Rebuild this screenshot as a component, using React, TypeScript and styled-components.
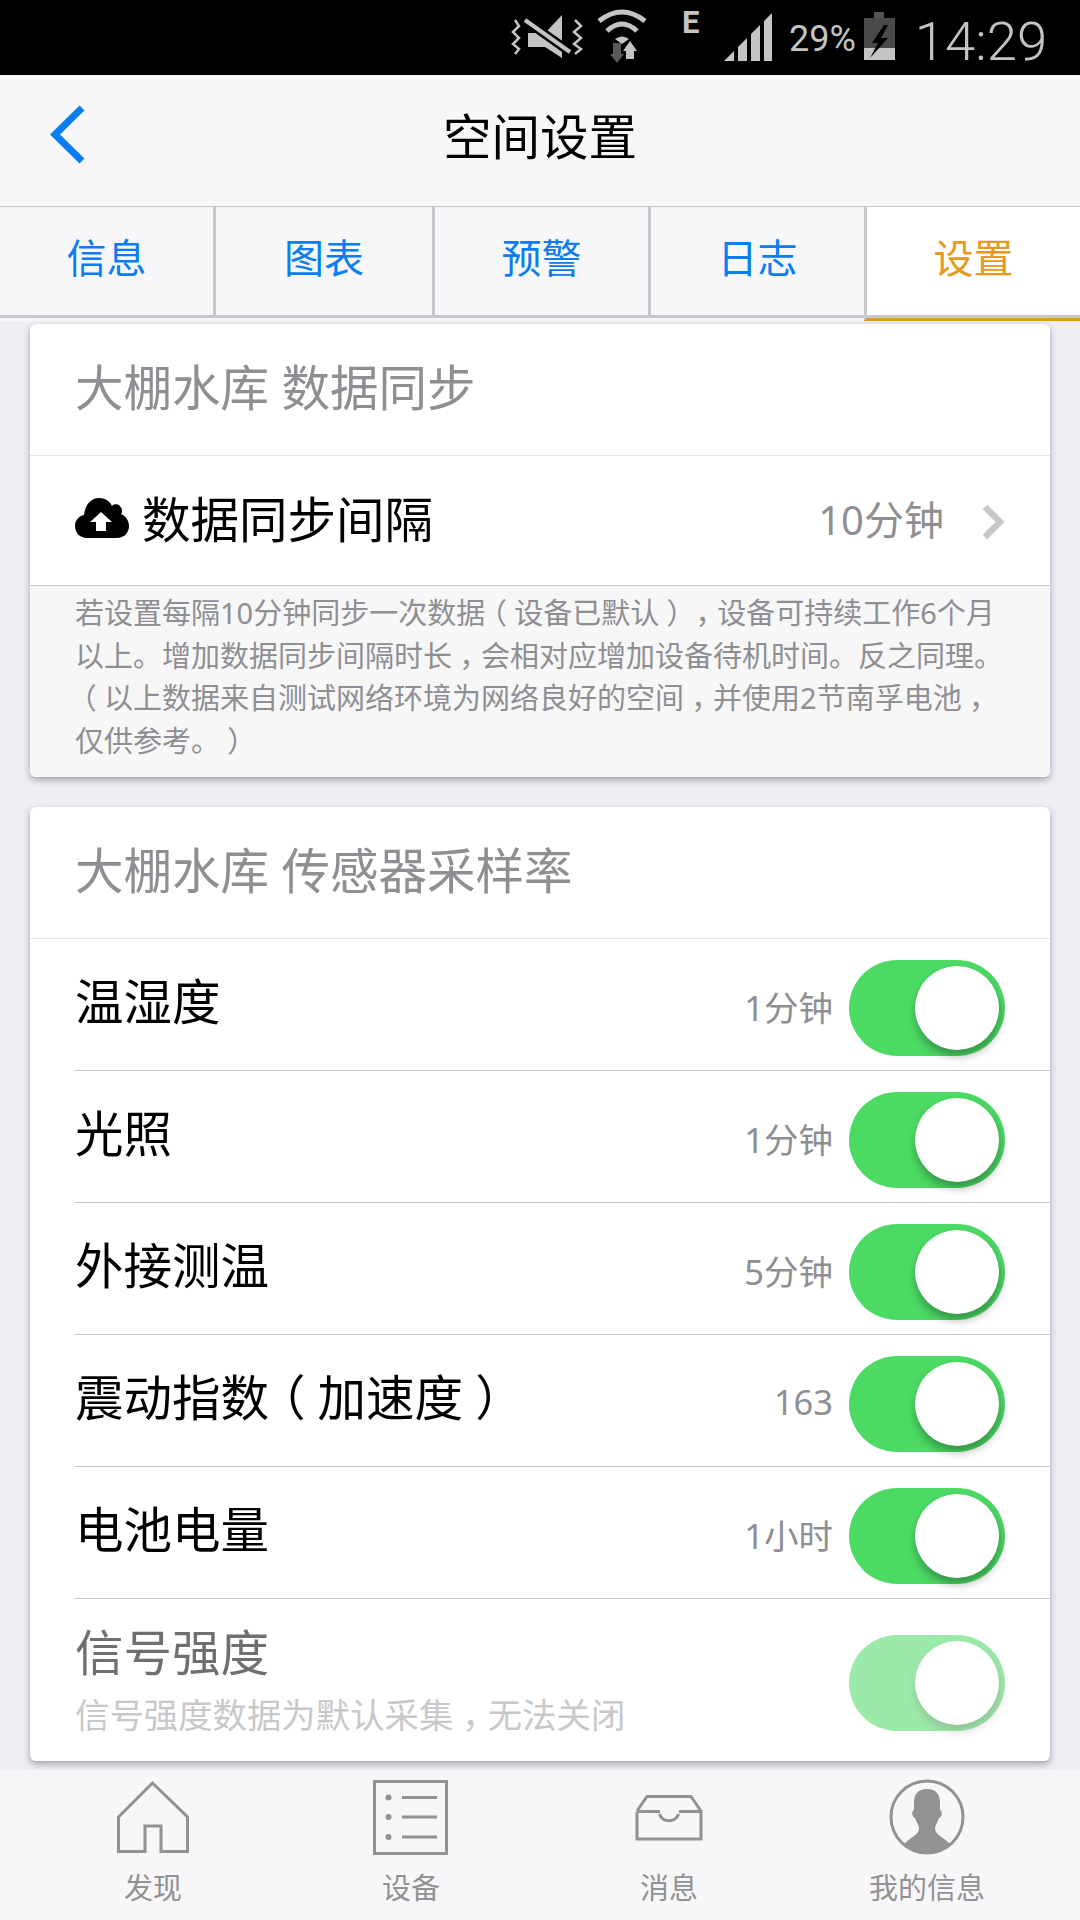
import React from "react";
import styled, { createGlobalStyle } from "styled-components";

const colors = {
  blue: "#0a7df2",
  orange: "#e8981e",
  gray: "#8e8e93",
  line: "#c8c7cc",
  lineLight: "#e4e4e6",
  bar: "#f7f7f9",
  page: "#eeeef4",
  green: "#4cd964",
  status: "#c4c4c4",
  icon: "#929292",
};

const GlobalStyle = createGlobalStyle`
  html, body {
    margin: 0;
    padding: 0;
    background: ${colors.page};
  }
  body {
    font-family: "Noto Sans", "Noto Sans CJK SC", sans-serif;
    color: #000;
  }
  * {
    box-sizing: border-box;
  }
`;

const Screen = styled.div`
  width: 1080px;
  height: 1920px;
  display: flex;
  flex-direction: column;
  overflow: hidden;
`;

/* status bar */
const StatusBar = styled.div`
  height: 75px;
  flex: none;
  background: #000;
  display: flex;
  align-items: flex-start;
  padding-left: 510px;
  color: ${colors.status};
`;

const StatusIcon = styled.svg<{ $left: number; $top: number }>`
  flex: none;
  margin-left: ${(p) => p.$left}px;
  margin-top: ${(p) => p.$top}px;
`;

const NetworkType = styled.span`
  margin-left: 34px;
  margin-top: 5px;
  width: 20px;
  font: 700 31px/36px Roboto, sans-serif;
`;

const Percent = styled.span`
  margin-left: 17px;
  margin-top: 19px;
  font: 400 36px/40px Roboto, sans-serif;
`;

const Clock = styled.span`
  margin-left: 20px;
  margin-top: 9px;
  font: 300 54.5px/64px Roboto, sans-serif;
`;

/* nav bar */
const NavBar = styled.div`
  height: 132px;
  flex: none;
  background: ${colors.bar};
  border-bottom: 1px solid ${colors.line};
  display: flex;
  align-items: center;
  justify-content: center;
  position: relative;
`;

const BackIcon = styled.svg`
  position: absolute;
  left: 47px;
  top: 27px;
`;

const NavTitle = styled.div`
  font-size: 48.5px;
  line-height: 60px;
  margin-top: -9px;
`;

/* tabs */
const TabRow = styled.div`
  height: 114px;
  flex: none;
  display: flex;
  background: ${colors.bar};
`;

const Tab = styled.div<{ $active?: boolean }>`
  flex: none;
  width: 216px;
  height: ${(p) => (p.$active ? 114 : 111)}px;
  display: flex;
  align-items: center;
  justify-content: center;
  padding-bottom: ${(p) => (p.$active ? 13 : 10)}px;
  font-size: 40px;
  color: ${(p) => (p.$active ? colors.orange : colors.blue)};
  background: ${(p) => (p.$active ? "#fff" : colors.bar)};
  border-bottom: 3px solid ${(p) => (p.$active ? colors.orange : colors.line)};
  box-shadow: ${(p) => (p.$active ? `inset 0 -3px 0 ${colors.line}` : "none")};
  border-left: 3px solid ${colors.line};

  &:first-child {
    border-left: none;
    border-right: 3px solid ${colors.line};
  }
  &:nth-child(2) {
    border-left: none;
  }
`;

/* content */
const Content = styled.div`
  flex: 1;
  min-height: 0;
  padding: 3px 30px 0;
  display: flex;
  flex-direction: column;
  gap: 30px;
  background: ${colors.page};
`;

const Card = styled.section`
  background: #fff;
  border-radius: 6px;
  box-shadow: 0 3px 7px rgba(40, 40, 60, 0.38);
  overflow: hidden;
`;

const CardTitle = styled.div`
  height: 132px;
  padding: 0 45px 10px;
  display: flex;
  align-items: center;
  font-size: 48.5px;
  color: ${colors.gray};
  border-bottom: 1px solid ${colors.lineLight};
`;

const SyncRow = styled.div`
  height: 130px;
  padding: 0 45px;
  display: flex;
  align-items: center;
  border-bottom: 1px solid ${colors.line};
`;

const CloudIcon = styled.svg`
  flex: none;
  margin-right: 13px;
  margin-bottom: 7px;
`;

const SyncLabel = styled.span`
  font-size: 48.5px;
  line-height: 60px;
  margin-top: -3px;
  flex: 1;
`;

const SyncValue = styled.span`
  font-size: 40px;
  color: ${colors.gray};
  margin-right: 37px;
  margin-top: -6px;
`;

const RowChevron = styled.svg`
  flex: none;
  margin-top: 3px;
`;

const Note = styled.div`
  padding: 6px 45px 15px;
  background: #f7f7f8;
  font-size: 29px;
  line-height: 42.5px;
  color: ${colors.gray};
  text-spacing-trim: space-all;
`;

const NoteLine = styled.div`
  white-space: nowrap;
`;

// half-width glyph with even margins: the mark sits in the middle of its cell
const Punct = styled.span`
  font-feature-settings: "halt";
  margin: 0 0.25em;
`;

const SensorRow = styled.div`
  height: 132px;
  margin-left: 45px;
  padding-right: 45px;
  display: flex;
  align-items: center;
  border-bottom: 1px solid ${colors.line};
`;

const LockedRow = styled(SensorRow)`
  height: 162px;
  border-bottom: none;
  align-items: flex-start;
`;

const SensorLabel = styled.span`
  flex: 1;
  font-size: 48.5px;
  line-height: 60px;
  margin-top: -8px;
`;

const SensorValue = styled.span`
  font-size: 34.5px;
  color: ${colors.gray};
  margin-right: 16px;
  margin-top: 2px;
`;

const LockedText = styled.div`
  flex: 1;
  display: flex;
  flex-direction: column;
  padding-top: 23px;
`;

const LockedLabel = styled.span`
  font-size: 48.5px;
  line-height: 60px;
  color: #6f6f72;
`;

const LockedHint = styled.span`
  font-size: 34.4px;
  line-height: 44px;
  margin-top: 11px;
  color: #c8c8ca;
`;

const Toggle = styled.div<{ $faded?: boolean }>`
  flex: none;
  width: 156px;
  height: 96px;
  margin-top: ${(p) => (p.$faded ? 36 : 7)}px;
  border-radius: 48px;
  background: ${colors.green};
  position: relative;
  opacity: ${(p) => (p.$faded ? 0.55 : 1)};
`;

const Knob = styled.div`
  position: absolute;
  left: 66px;
  top: 6px;
  width: 84px;
  height: 84px;
  border-radius: 50%;
  background: #fff;
  box-shadow: 1px 6px 10px rgba(0, 0, 0, 0.32);
`;

/* bottom bar */
const BottomBar = styled.nav`
  height: 150px;
  flex: none;
  background: ${colors.bar};
  padding: 9px 24px 0;
  display: grid;
  grid-template-columns: repeat(4, 1fr);
`;

const BottomItem = styled.div`
  display: flex;
  flex-direction: column;
  align-items: center;
`;

const BottomIconBox = styled.div`
  height: 76px;
  display: flex;
  align-items: center;
  justify-content: center;
`;

const BottomLabel = styled.span`
  margin-top: 12px;
  font-size: 29px;
  line-height: 42px;
  color: ${colors.icon};
`;

/* drawings */
const MuteVibrateIcon = () => (
  <StatusIcon $left={0} $top={14} width="74" height="46" viewBox="0 0 74 46" fill="none">
    <path d="M18 19 H35 L52 1 V44 L35 33 H18 Z" fill={colors.status} />
    <path d="M15 6 L60 38" stroke="#000" strokeWidth="9" />
    <path d="M15 6 L60 38" stroke={colors.status} strokeWidth="4" />
    <path
      d="M5 6 L9 12 L3 18 L9 24 L3 30 L9 35 L5 40 M65 6 L71 12 L64 18 L71 24 L64 30 L71 35 L65 40"
      stroke={colors.status}
      strokeWidth="2.5"
    />
  </StatusIcon>
);

const WifiIcon = () => (
  <StatusIcon $left={12} $top={9} width="52" height="55" viewBox="0 0 52 55" fill="none">
    <path d="M3 12 Q26 -6 49 12" stroke={colors.status} strokeWidth="5" />
    <path d="M11 22 Q26 8 41 22" stroke={colors.status} strokeWidth="5" />
    <path d="M19 30 Q26 25 33 30 L26 35 Z" fill={colors.status} />
    <path d="M17 34 H25 V45 H28 L21 54 L14 45 H17 Z" fill="#5a5a5a" />
    <path d="M30 50 V42 H27 L34 32 L41 42 H38 V50 Z" fill={colors.status} />
  </StatusIcon>
);

const SignalIcon = () => (
  <StatusIcon $left={22} $top={13} width="48" height="48" viewBox="0 0 48 48">
    <polygon points="0,48 10,38 10,48" fill={colors.status} />
    <polygon points="14,34 23,25 23,48 14,48" fill={colors.status} />
    <polygon points="27,21 36,12 36,48 27,48" fill={colors.status} />
    <polygon points="40,8 48,0 48,48 40,48" fill={colors.status} />
  </StatusIcon>
);

const BatteryIcon = () => (
  <StatusIcon $left={8} $top={12} width="31" height="48" viewBox="0 0 31 48">
    <rect x="10" y="0" width="10" height="6" fill="#555" />
    <rect x="0" y="6" width="31" height="30" fill="#4a4a4a" />
    <rect x="0" y="36" width="31" height="12" fill={colors.status} />
    <path d="M20 13 L8 31 H14 L6 46 L24 26 H17 L24 13 Z" fill="#000" />
  </StatusIcon>
);

const CloudUpload = () => (
  <CloudIcon width="54" height="41" viewBox="0 0 54 41">
    <path
      d="M12 41 C5 41 0 36 0 29 C0 23 4 19 9 18 C10 8 16 1 24 1 C30 1 35 4 37 9 C39 6 46 7 47 13 C47 15 47 16 46 17 C51 19 54 24 54 29 C54 36 49 41 42 41 Z"
      fill="#000"
    />
    <path d="M26 15 L37 25 H31 V34 H21 V25 H15 Z" fill="#fff" />
  </CloudIcon>
);

const HomeIcon = () => (
  <svg width="74" height="74" viewBox="0 0 74 74" fill="none" stroke={colors.icon} strokeWidth="3">
    <path d="M36.5 3 L2.5 37 V71.5 H29 V46 H45 V71.5 H71.5 V37 Z" />
  </svg>
);

const DeviceIcon = () => (
  <svg width="76" height="75" viewBox="0 0 76 75" fill="none" stroke={colors.icon} strokeWidth="3">
    <rect x="1.5" y="1.5" width="72" height="72" />
    <path d="M29 17.5 H64 M29 37 H64 M29 57 H64" />
    <circle cx="15.5" cy="17.5" r="3" fill={colors.icon} stroke="none" />
    <circle cx="15.5" cy="37" r="3" fill={colors.icon} stroke="none" />
    <circle cx="15.5" cy="57" r="3" fill={colors.icon} stroke="none" />
  </svg>
);

const InboxIcon = () => (
  <svg width="68" height="47" viewBox="0 0 68 47" fill="none" stroke={colors.icon} strokeWidth="3">
    <path d="M2 17 L12 2.5 H56 L66 17" />
    <path d="M2 17.5 H25 M44 17.5 H66 V45 H2 V17.5" />
    <path d="M24.5 20 C27 29 41 29 43.5 20" />
  </svg>
);

const AvatarIcon = () => (
  <svg width="76" height="76" viewBox="0 0 76 76" fill="none">
    <circle cx="38" cy="38" r="36" stroke={colors.icon} strokeWidth="3" />
    <path
      d="M38 10 C47 10 51 15 51 24 V31 C54 32 53 38 50 39 C48 44 46 47 46 50 C46 55 54 58 62 66 A37 37 0 0 1 14 66 C22 58 30 55 30 50 C30 47 28 44 26 39 C23 38 22 32 25 31 V24 C25 15 29 10 38 10 Z"
      fill={colors.icon}
    />
  </svg>
);

const spaced = (text: string) =>
  text.split(/([（），])/).map((part, i) => (i % 2 ? <Punct key={i}>{part}</Punct> : part));

const tabs = ["信息", "图表", "预警", "日志", "设置"];

const noteLines = [
  "若设置每隔10分钟同步一次数据（设备已默认），设备可持续工作6个月",
  "以上。增加数据同步间隔时长，会相对应增加设备待机时间。反之同理。",
  "（以上数据来自测试网络环境为网络良好的空间，并使用2节南孚电池，",
  "仅供参考。）",
];

const sensors = [
  { name: "温湿度", value: "1分钟" },
  { name: "光照", value: "1分钟" },
  { name: "外接测温", value: "5分钟" },
  { name: "震动指数（加速度）", value: "163" },
  { name: "电池电量", value: "1小时" },
];

const bottomItems = [
  { label: "发现", icon: <HomeIcon /> },
  { label: "设备", icon: <DeviceIcon /> },
  { label: "消息", icon: <InboxIcon /> },
  { label: "我的信息", icon: <AvatarIcon /> },
];

const App = () => (
  <Screen>
    <GlobalStyle />
    <StatusBar>
      <MuteVibrateIcon />
      <WifiIcon />
      <NetworkType>E</NetworkType>
      <SignalIcon />
      <Percent>29%</Percent>
      <BatteryIcon />
      <Clock>14:29</Clock>
    </StatusBar>
    <NavBar>
      <BackIcon width="44" height="66" viewBox="0 0 44 66" fill="none" stroke={colors.blue} strokeWidth="7">
        <path d="M35 6 L8 32.5 L35 59" />
      </BackIcon>
      <NavTitle>空间设置</NavTitle>
    </NavBar>
    <TabRow>
      {tabs.map((t, i) => (
        <Tab key={t} $active={i === 4}>
          {t}
        </Tab>
      ))}
    </TabRow>
    <Content>
      <Card>
        <CardTitle>大棚水库 数据同步</CardTitle>
        <SyncRow>
          <CloudUpload />
          <SyncLabel>数据同步间隔</SyncLabel>
          <SyncValue>10分钟</SyncValue>
          <RowChevron width="24" height="36" viewBox="0 0 24 36" fill="none" stroke={colors.line} strokeWidth="6.5">
            <path d="M4 3 L19 18 L4 33" />
          </RowChevron>
        </SyncRow>
        <Note>
          {noteLines.map((line) => (
            <NoteLine key={line}>{spaced(line)}</NoteLine>
          ))}
        </Note>
      </Card>
      <Card>
        <CardTitle>大棚水库 传感器采样率</CardTitle>
        {sensors.map((s) => (
          <SensorRow key={s.name}>
            <SensorLabel>{spaced(s.name)}</SensorLabel>
            <SensorValue>{s.value}</SensorValue>
            <Toggle>
              <Knob />
            </Toggle>
          </SensorRow>
        ))}
        <LockedRow>
          <LockedText>
            <LockedLabel>信号强度</LockedLabel>
            <LockedHint>{spaced("信号强度数据为默认采集，无法关闭")}</LockedHint>
          </LockedText>
          <Toggle $faded>
            <Knob />
          </Toggle>
        </LockedRow>
      </Card>
    </Content>
    <BottomBar>
      {bottomItems.map((item) => (
        <BottomItem key={item.label}>
          <BottomIconBox>{item.icon}</BottomIconBox>
          <BottomLabel>{item.label}</BottomLabel>
        </BottomItem>
      ))}
    </BottomBar>
  </Screen>
);

export default App;
